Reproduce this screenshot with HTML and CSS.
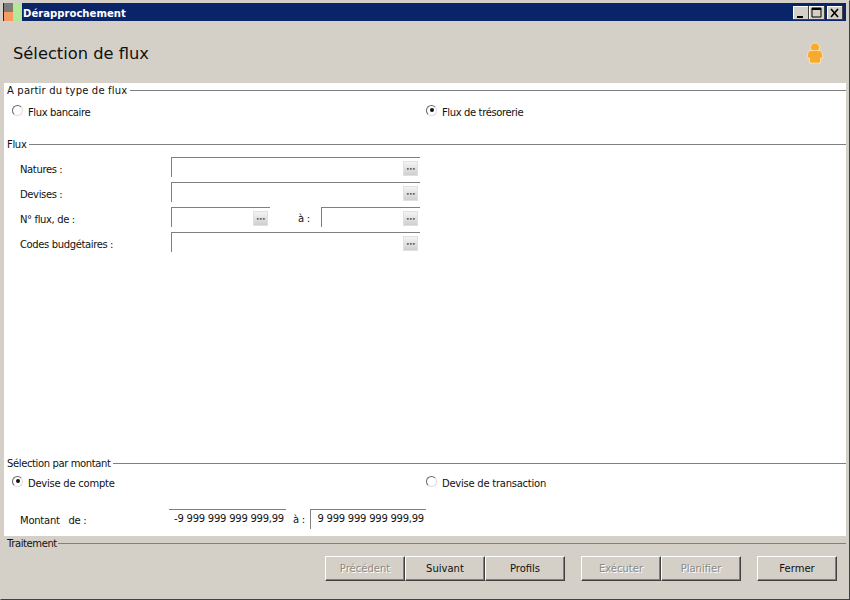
FILE: index.html
```html
<!DOCTYPE html>
<html lang="fr">
<head>
<meta charset="utf-8">
<title>Dérapprochement</title>
<link rel="stylesheet" href="styles.css">
</head>
<body>
<div class="window">
  <div class="titlebar">
    <svg class="appicon" width="18" height="18" viewBox="0 0 18 18"><rect width="9" height="9" fill="#7d7d78"/><rect x="9" width="9" height="18" fill="#b6e69a"/><rect y="9" width="9" height="9" fill="#f79a63"/></svg>
    <span class="apptitle">Dérapprochement</span>
    <div class="winbtns">
      <span class="winbtn"><svg width="16" height="14" viewBox="0 0 16 14"><rect x="4" y="10" width="6" height="2" fill="#000"/></svg></span>
      <span class="winbtn"><svg width="16" height="14" viewBox="0 0 16 14"><path d="M3 2h9v9H3z M3 2.5h9" fill="none" stroke="#000"/><rect x="3" y="2" width="9" height="2" fill="#000"/></svg></span>
      <span class="winbtn close"><svg width="16" height="14" viewBox="0 0 16 14"><path d="M4 3l7 8M11 3l-7 8" stroke="#000" stroke-width="1.6" fill="none"/></svg></span>
    </div>
  </div>
  <div class="header">
    <h1>Sélection de flux</h1>
    <svg width="18" height="22" viewBox="0 0 18 22"><circle cx="9" cy="5.500" r="4.500" fill="#f9a92c" stroke="#fff0c8" stroke-width=".7"/><path d="M5 8.500h8c2 0 2.800 1.500 3.300 3.500l.7 4h-2.500v5h-11v-5H1l.7-4c.5-2 1.300-3.500 3.300-3.500z" fill="#f9a92c" stroke="#fff0c8" stroke-width=".7"/></svg>
  </div>
  <div class="content">
    <section class="type-section">
      <div class="legend wide-legend"><span>A partir du type de flux</span></div>
      <div class="radios">
        <label class="radio"><i class="dot"></i>Flux bancaire</label>
        <label class="radio"><i class="dot on"></i>Flux de trésorerie</label>
      </div>
    </section>
    <section class="flux-section">
      <div class="legend"><span>Flux</span></div>
      <div class="fields">
        <div class="row"><span class="label">Natures :</span><div class="input wide"><b class="pick">•••</b></div></div>
        <div class="row"><span class="label">Devises :</span><div class="input wide"><b class="pick">•••</b></div></div>
        <div class="row"><span class="label">N° flux, de :</span><div class="input short"><b class="pick">•••</b></div><span class="to">à :</span><div class="input shorter"><b class="pick">•••</b></div></div>
        <div class="row"><span class="label">Codes budgétaires :</span><div class="input wide"><b class="pick">•••</b></div></div>
      </div>
    </section>
    <section class="amount-section">
      <div class="legend amount-legend"><span>Sélection par montant</span></div>
      <div class="radios tight">
        <label class="radio"><i class="dot on"></i>Devise de compte</label>
        <label class="radio"><i class="dot"></i>Devise de transaction</label>
      </div>
      <div class="amounts">
        <span class="amount-label">Montant &nbsp; de :</span>
        <div class="amount first">-9 999 999 999 999,99</div>
        <span class="amount-to">à :</span>
        <div class="amount second">9 999 999 999 999,99</div>
      </div>
    </section>
  </div>
  <div class="footer">
    <div class="legend narrow-legend"><span>Traitement</span></div>
    <div class="actions">
      <div class="group">
        <button class="btn" disabled>Précédent</button><button class="btn">Suivant</button><button class="btn">Profils</button>
      </div>
      <div class="group">
        <button class="btn" disabled>Exécuter</button><button class="btn" disabled>Planifier</button>
      </div>
      <div class="group">
        <button class="btn">Fermer</button>
      </div>
    </div>
  </div>
</div>
</body>
</html>
```

FILE: styles.css
```css
* { box-sizing: border-box; }
html, body { margin: 0; height: 100%; }
body { width: 850px; height: 600px; overflow: hidden; font-family: "DejaVu Sans", sans-serif; font-size: 10px; color: #111; }
.window { width: 850px; height: 600px; display: flex; flex-direction: column; background: #d4d0c8; padding: 3px 3px 2px 3px; border: 1px solid #d4d0c8; border-right-color: #404040; border-bottom-color: #404040; }
.titlebar { height: 18px; margin: -1px 0 0 -1px; flex: none; background: #0a246a; display: flex; align-items: center; color: #fff; padding-top: 1px; }
.appicon { flex: none; margin: -1px 0 0 1px; }
.apptitle { font-weight: bold; font-size: 10.100px; margin: 1px 0 0 1px; }
.winbtns { margin-left: auto; display: flex; margin-right: 3px; }
.winbtn { width: 16px; height: 14px; background: #d4d0c8; display: block; box-shadow: inset -1px -1px 0 #404040, inset 1px 1px 0 #fff; }
.winbtn.close { margin-left: 2px; }
.winbtn svg { display: block; }
.header { height: 62px; flex: none; display: flex; align-items: center; justify-content: space-between; padding: 0 22px 0 9px; }
.header h1 { margin: 2px 0 0; font-weight: normal; font-size: 16.300px; color: #111; }
.header svg { margin-top: 2px; }
.content { height: 453px; flex: none; background: #fff; display: flex; flex-direction: column; }
.legend { display: flex; align-items: center; height: 14px; padding-left: 3px; letter-spacing: -.33px; }
.legend::after { content: ""; flex: 1; height: 1px; background: #808080; margin-left: 3px; }
.amount-legend { letter-spacing: -.38px; margin-top: -1px; }
.amount-legend::after { margin-left: 2px; }
.wide-legend { letter-spacing: .17px; }
.narrow-legend { letter-spacing: -.4px; }
.narrow-legend::after { margin-left: 1px; }
.type-section { height: 54px; }
.radios { display: grid; grid-template-columns: 414px 1fr; padding: 8px 0 0 8px; letter-spacing: -.38px; }
.radios.tight { padding-top: 6px; letter-spacing: -.25px; }
.radio { display: flex; align-items: center; gap: 5px; height: 14px; }
.dot { width: 11px; height: 11px; border-radius: 50%; border: 1px solid #666; border-right-color: #ddd; border-bottom-color: #ddd; display: block; background: #fff; position: relative; top: -2px; }
.dot.on::after { content: ""; position: absolute; left: 2.500px; top: 2.500px; width: 4px; height: 4px; border-radius: 50%; background: #111; }
.flux-section { flex: 1; }
.fields { display: flex; flex-direction: column; gap: 6px; padding: 6px 0 0 16px; }
.row { display: flex; align-items: flex-start; height: 19px; }
.label { width: 151px; padding-top: 7px; letter-spacing: -.37px; }
.input { border-top: 1px solid #808080; border-left: 1px solid #808080; height: 20px; position: relative; flex: none; }
.wide { width: 249px; }
.short { width: 99px; }
.shorter { width: 99px; }
.to { width: 51px; padding: 6px 0 0 28px; letter-spacing: -.3px; }
.pick { position: absolute; right: 2px; top: 3px; width: 15px; height: 15px; background: linear-gradient(#f4f4f4, #cfcfcf); border: 1px solid #e0e0e0; font-size: 6px; line-height: 13px; text-align: center; letter-spacing: -.5px; color: #444; font-weight: normal; overflow: hidden; }
.amount-section { height: 79px; flex: none; }
.amounts { display: flex; align-items: flex-start; margin-top: 19px; padding-left: 16px; }
.amount-label { width: 149px; padding-top: 6px; letter-spacing: -.25px; }
.amount { height: 20px; border-top: 1px solid #808080; text-align: right; padding: 3px 2px 0 0; white-space: nowrap; letter-spacing: -.24px; }
.amount.first { width: 117px; }
.amount.second { width: 116px; border-left: 1px solid #808080; }
.amount-to { width: 24px; padding: 5px 0 0 7px; letter-spacing: -.3px; }
.footer { flex: 1; display: flex; flex-direction: column; }
.actions { display: flex; justify-content: flex-end; gap: 16px; padding: 6px 9px 0 0; }
.group { display: flex; }
.btn { width: 80px; height: 25px; padding: 0 0 1px; background: #d4d0c8; border: 1px solid; border-color: #fff #404040 #404040 #fff; box-shadow: inset -1px -1px 0 #808080; font: inherit; color: #111; }
.btn:disabled { color: #8c8a85; text-shadow: 1px 1px 0 #fff; }
```
